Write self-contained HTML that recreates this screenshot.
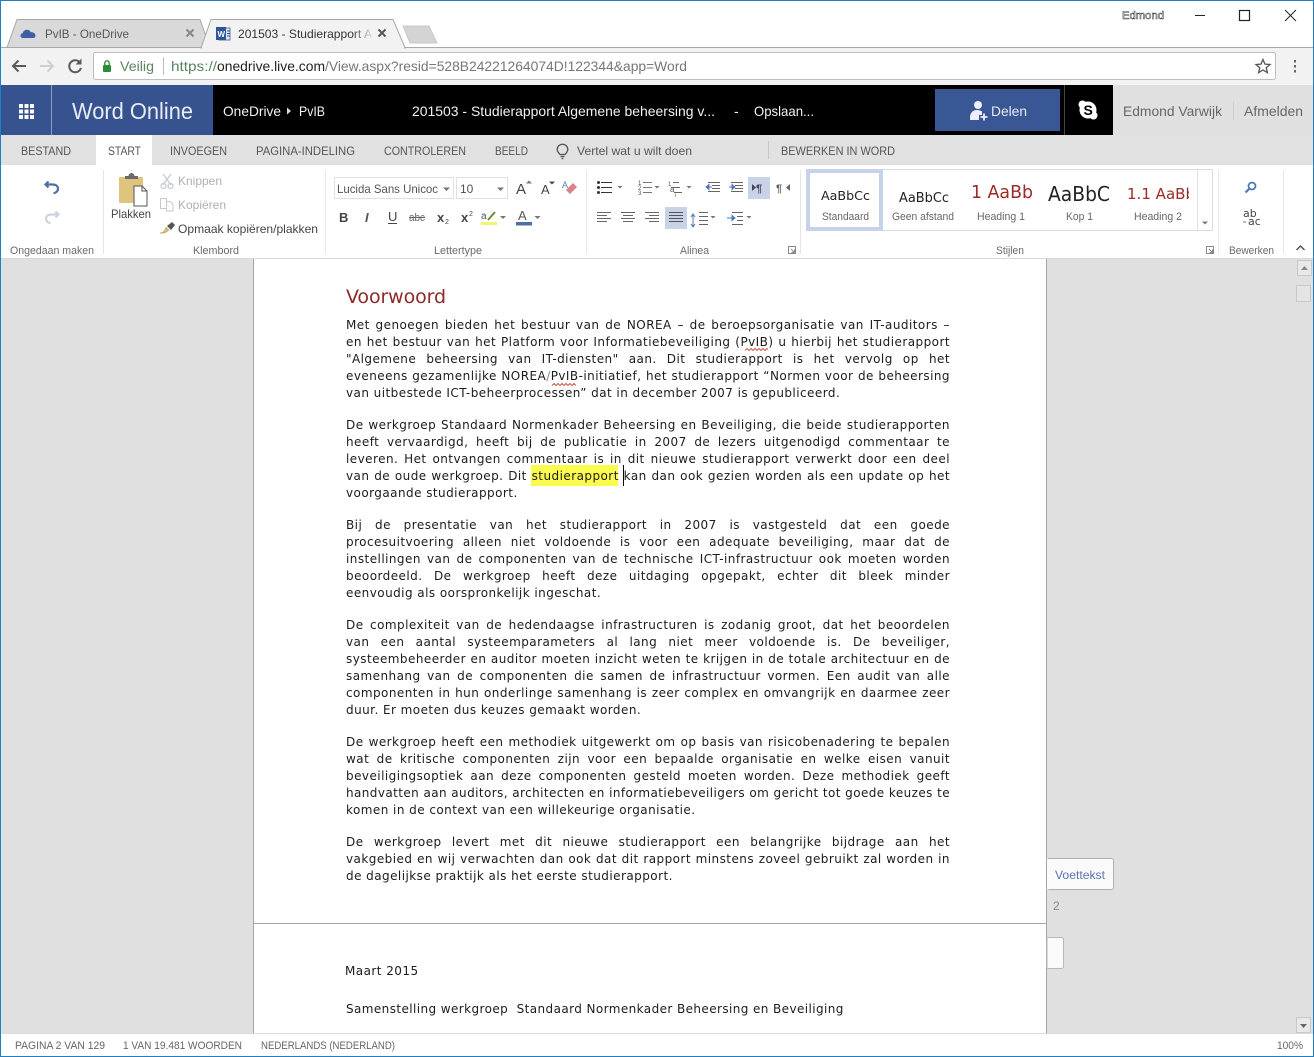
<!DOCTYPE html>
<html lang="nl"><head><meta charset="utf-8"><title>Word Online</title>
<style>
html,body{margin:0;padding:0;background:#fff}
#w{position:relative;width:1314px;height:1057px;overflow:hidden;background:#fff}
svg{position:absolute;left:0;top:0}
svg text{font-family:"Liberation Sans",sans-serif;white-space:pre}
#doc{position:absolute;left:0;top:1px;width:1314px;height:1057px;font:12px/17px "DejaVu Sans",sans-serif;color:#1c1c1c}
.l{position:absolute;left:346px;width:604px;height:17px;text-align:justify;text-align-last:justify;white-space:nowrap;letter-spacing:.45px}
.e{text-align:left;text-align-last:left;white-space:pre}
</style></head><body><div id="w">

<svg width="1314" height="1057" viewBox="0 0 1314 1057" style="z-index:0">
<!-- chrome -->
<rect width="1314" height="1057" fill="#fff"/>
<rect x="0" y="48" width="1314" height="37" fill="#f2f2f2"/>
<rect x="0" y="47" width="1314" height="1" fill="#a8a8a8"/>
<polygon points="7,47.5 17,19.5 200,19.5 210,47.5" fill="#d9d9d9" stroke="#a8a8a8"/>
<polygon points="201,48 211,19.5 393,19.5 405,47.5 405,48" fill="#f2f2f2" stroke="#a8a8a8"/>
<rect x="202" y="47" width="202" height="2" fill="#f2f2f2"/>
<polygon points="403,26 429,26 437,43 410,43" fill="#d4d4d4" stroke="#cacaca"/>
<path d="M23 38c-1.500 0-2.500-1-2.500-2.400 0-1.300 1-2.300 2.200-2.400 .5-2 2.200-3.400 4.200-3.400 1.700 0 3.200 1 3.900 2.400 2.400-.3 4.700 1.300 4.700 3.400 0 1.500-1 2.400-2.500 2.400z" fill="#3f5fa8"/>
<text x="45" y="38" font-size="12" fill="#555" textLength="84" lengthAdjust="spacingAndGlyphs">PvIB - OneDrive</text>
<path d="M186.500 29.500l7 7M193.500 29.500l-7 7" stroke="#888" stroke-width="2"/>
<rect x="219" y="28" width="11" height="12" fill="#e4e8f0" stroke="#5a78b0"/>
<rect x="216" y="27" width="10" height="13" fill="#2f5597"/>
<text x="217.500" y="37" font-size="8" font-weight="bold" fill="#fff">W</text>
<path d="M227 31h3M227 33.500h3M227 36h3" stroke="#2f5597"/>
<text x="238" y="38" font-size="12" fill="#333" textLength="134" lengthAdjust="spacingAndGlyphs">201503 - Studierapport A</text>
<defs><linearGradient id="f"><stop offset="0" stop-color="#f2f2f2" stop-opacity="0"/><stop offset="1" stop-color="#f2f2f2"/></linearGradient></defs>
<rect x="352" y="25" width="22" height="18" fill="url(#f)"/>
<path d="M378.500 29.500l7 7M385.500 29.500l-7 7" stroke="#555" stroke-width="2"/>
<text x="1122" y="19" font-size="11" fill="#fff" stroke="#333" stroke-width=".5" textLength="42" lengthAdjust="spacingAndGlyphs">Edmond</text>
<path d="M1195 15.500h10" stroke="#222"/>
<rect x="1239.500" y="10.500" width="10" height="10" fill="none" stroke="#222" stroke-width="1.200"/>
<path d="M1285 10l11 11M1296 10l-11 11" stroke="#222"/>
<!-- nav -->
<path d="M26 66H13M18.500 60.500L13 66l5.500 5.500" fill="none" stroke="#5a5a5a" stroke-width="2"/>
<path d="M40 66h13M47.500 60.500L53 66l-5.500 5.500" fill="none" stroke="#cfcfcf" stroke-width="2"/>
<path d="M80 62.500a6 6 0 1 0 1 5.500" fill="none" stroke="#5a5a5a" stroke-width="2"/>
<path d="M81.500 58.500v6h-6z" fill="#5a5a5a"/>
<rect x="93.500" y="52.500" width="1182" height="27" rx="2" fill="#fff" stroke="#bdbdbd"/>
<rect x="103" y="65" width="8" height="7" rx="1" fill="#2e8b3a"/>
<path d="M104.800 65v-2a2.200 2.200 0 0 1 4.400 0v2" fill="none" stroke="#2e8b3a" stroke-width="1.300"/>
<text x="120" y="71" font-size="13.500" fill="#5b8460" textLength="34" lengthAdjust="spacingAndGlyphs">Veilig</text>
<rect x="163" y="57" width="1" height="18" fill="#bbb"/>
<text x="171" y="71" font-size="14" fill="#5b8460" textLength="46" lengthAdjust="spacingAndGlyphs">https://</text>
<text x="217" y="71" font-size="14" fill="#222" textLength="108" lengthAdjust="spacingAndGlyphs">onedrive.live.com</text>
<text x="325" y="71" font-size="14" fill="#777" textLength="362" lengthAdjust="spacingAndGlyphs">/View.aspx?resid=528B24221264074D!122344&amp;app=Word</text>
<path d="M1263 59.500l2 4.600 5 .4-3.800 3.200 1.200 4.900-4.400-2.600-4.400 2.600 1.200-4.900-3.800-3.200 5-.4z" fill="none" stroke="#555" stroke-width="1.300"/>
<path d="M1295 60v2.500M1295 65v2.500M1295 70v2.500" stroke="#666" stroke-width="2"/>
<!-- header -->
<rect x="0" y="85" width="1113" height="50" fill="#000"/>
<rect x="1113" y="85" width="201" height="50" fill="#e0e0e0"/>
<rect x="1" y="85" width="212" height="50" fill="#36538f"/>
<rect x="51" y="85" width="1" height="50" fill="#8f9fc2"/>
<g fill="#fff"><rect x="19" y="104" width="4" height="4"/><rect x="24.500" y="104" width="4" height="4"/><rect x="30" y="104" width="4" height="4"/><rect x="19" y="109.500" width="4" height="4"/><rect x="24.500" y="109.500" width="4" height="4"/><rect x="30" y="109.500" width="4" height="4"/><rect x="19" y="115" width="4" height="4"/><rect x="24.500" y="115" width="4" height="4"/><rect x="30" y="115" width="4" height="4"/></g>
<text x="72" y="119" font-size="23" fill="#e8ecf5" textLength="121" lengthAdjust="spacingAndGlyphs">Word Online</text>
<text x="223" y="116" font-size="14" fill="#f2f2f2" textLength="58" lengthAdjust="spacingAndGlyphs">OneDrive</text>
<path d="M287 107.500l4 3.500-4 3.500z" fill="#ddd"/>
<text x="299" y="116" font-size="14" fill="#f2f2f2" textLength="26" lengthAdjust="spacingAndGlyphs">PvIB</text>
<text x="412" y="116" font-size="14" fill="#f2f2f2" textLength="303" lengthAdjust="spacingAndGlyphs">201503 - Studierapport Algemene beheersing v...</text>
<text x="734" y="116" font-size="14" fill="#f2f2f2">-</text>
<text x="754" y="116" font-size="14" fill="#f2f2f2" textLength="60" lengthAdjust="spacingAndGlyphs">Opslaan...</text>
<rect x="935" y="89" width="125" height="42" fill="#3a5795"/>
<circle cx="978" cy="105" r="4" fill="#eef"/>
<path d="M970 120v-3c0-4 3-7 7-7 2 0 3.500.5 5 1.500v3.500h-3v5z" fill="#eef"/>
<path d="M984 113.500v7M980.500 117h7" stroke="#eef" stroke-width="1.800"/>
<text x="991" y="116" font-size="14" fill="#e8ecf5" textLength="36" lengthAdjust="spacingAndGlyphs">Delen</text>
<rect x="1064" y="85" width="1" height="50" fill="#444"/>
<circle cx="1088" cy="110" r="8.500" fill="#fff"/>
<circle cx="1082.500" cy="104.500" r="4" fill="#fff"/><circle cx="1093.500" cy="115.500" r="4" fill="#fff"/>
<text x="1083.500" y="115" font-size="14" font-weight="bold" fill="#000">S</text>
<text x="1123" y="116" font-size="14" fill="#666" textLength="99" lengthAdjust="spacingAndGlyphs">Edmond Varwijk</text>
<rect x="1233" y="102" width="1" height="18" fill="#ccc"/>
<text x="1244" y="116" font-size="14" fill="#666" textLength="59" lengthAdjust="spacingAndGlyphs">Afmelden</text>
<!-- tabs -->
<rect x="1" y="135" width="1312" height="30" fill="#e1e1e1"/>
<rect x="96" y="135" width="56" height="31" fill="#fff"/>
<g font-size="12" fill="#555">
<text x="21" y="155" textLength="50" lengthAdjust="spacingAndGlyphs">BESTAND</text>
<text x="108" y="155" textLength="33" lengthAdjust="spacingAndGlyphs">START</text>
<text x="170" y="155" textLength="57" lengthAdjust="spacingAndGlyphs">INVOEGEN</text>
<text x="256" y="155" textLength="99" lengthAdjust="spacingAndGlyphs">PAGINA-INDELING</text>
<text x="384" y="155" textLength="82" lengthAdjust="spacingAndGlyphs">CONTROLEREN</text>
<text x="495" y="155" textLength="33" lengthAdjust="spacingAndGlyphs">BEELD</text>
<text x="577" y="155" textLength="115" lengthAdjust="spacingAndGlyphs">Vertel wat u wilt doen</text>
<text x="781" y="155" textLength="114" lengthAdjust="spacingAndGlyphs">BEWERKEN IN WORD</text>
</g>
<path d="M560 154.500c-1-1.500-2.800-2.500-2.800-5a5.300 5.300 0 0 1 10.600 0c0 2.500-1.800 3.500-2.800 5z" fill="none" stroke="#555" stroke-width="1.300"/>
<path d="M560.500 156.500h4M561.500 158.500h2" stroke="#555" stroke-width="1.300"/>
<rect x="768" y="141" width="1" height="18" fill="#c8c8c8"/>
<!-- ribbon -->
<rect x="1" y="258" width="1312" height="1" fill="#d8d8d8"/>
<g fill="#e6e6e6"><rect x="103" y="170" width="1" height="84"/><rect x="325" y="170" width="1" height="84"/><rect x="586" y="170" width="1" height="84"/><rect x="800" y="170" width="1" height="84"/><rect x="1218" y="170" width="1" height="84"/><rect x="1283" y="170" width="1" height="84"/></g>
<g font-size="11" fill="#6a6a6a">
<text x="10" y="254" textLength="84" lengthAdjust="spacingAndGlyphs">Ongedaan maken</text>
<text x="193" y="254" textLength="46" lengthAdjust="spacingAndGlyphs">Klembord</text>
<text x="434" y="254" textLength="48" lengthAdjust="spacingAndGlyphs">Lettertype</text>
<text x="680" y="254" textLength="29" lengthAdjust="spacingAndGlyphs">Alinea</text>
<text x="996" y="254" textLength="28" lengthAdjust="spacingAndGlyphs">Stijlen</text>
<text x="1229" y="254" textLength="45" lengthAdjust="spacingAndGlyphs">Bewerken</text>
</g>
<!-- undo -->
<path d="M48.500 181.500l-3 3 3 3M45.500 184.500h7c3.500 0 5.500 1.800 5.500 4.200 0 2.400-2 4.300-4.500 4.300" fill="none" stroke="#4f6fa5" stroke-width="2.200"/>
<path d="M55.500 211.500l3 3-3 3M58.500 214.500h-7c-3.500 0-5.500 1.800-5.500 4.200 0 2.400 2 4.300 4.500 4.300" fill="none" stroke="#ccd4e0" stroke-width="2.200"/>
<!-- paste -->
<rect x="119" y="177" width="24" height="26" rx="1" fill="#dfc47e"/>
<path d="M125 179v-3h3.500a3 3 0 0 1 6 0h3.500v3z" fill="#6b6b6b"/>
<path d="M134 186h8l5 5v15h-13z" fill="#fff" stroke="#555"/>
<path d="M142 186v5h5" fill="none" stroke="#555"/>
<text x="111" y="218" font-size="12" fill="#444" textLength="40" lengthAdjust="spacingAndGlyphs">Plakken</text>
<path d="M163 174l8 11M171 174l-8 11" stroke="#c6cbd3" stroke-width="1.300"/><circle cx="163.500" cy="186" r="2.500" fill="none" stroke="#c6cbd3" stroke-width="1.300"/><circle cx="170.500" cy="186" r="2.500" fill="none" stroke="#c6cbd3" stroke-width="1.300"/>
<text x="178" y="185" font-size="12" fill="#b0b0b0" textLength="44" lengthAdjust="spacingAndGlyphs">Knippen</text>
<path d="M160.500 198.500h6v10h-6zM166.500 201.500h3.500l3 3v6.500h-6.500z" fill="#fff" stroke="#c9c9c9"/>
<text x="178" y="209" font-size="12" fill="#b0b0b0" textLength="48" lengthAdjust="spacingAndGlyphs">Kopiëren</text>
<path d="M160 233c3 0 5-3 6-6l3 3c-2 2-5 4-9 3z" fill="#d8b86c" stroke="#b89a52" stroke-width=".5"/>
<path d="M167 226l5-4 3 3-4 5z" fill="#555"/>
<text x="178" y="233" font-size="12" fill="#444" textLength="140" lengthAdjust="spacingAndGlyphs">Opmaak kopiëren/plakken</text>
<!-- font -->
<rect x="334.500" y="177.500" width="119" height="21" fill="#fff" stroke="#e0e0e0"/>
<rect x="456.500" y="177.500" width="51" height="21" fill="#fff" stroke="#e0e0e0"/>
<text x="337" y="193" font-size="12" fill="#555" textLength="101" lengthAdjust="spacingAndGlyphs">Lucida Sans Unicoc</text>
<text x="460" y="193" font-size="12" fill="#555">10</text>
<path d="M443 187.500h7l-3.500 3.500zM497 187.500h7l-3.500 3.500z" fill="#777"/>
<text x="516" y="194" font-size="15" fill="#444">A</text>
<path d="M526 183.500h6l-3-3z" fill="#777"/>
<text x="541" y="194" font-size="13" fill="#444">A</text>
<path d="M549 181.500h6l-3 3z" fill="#444"/>
<path d="M566 190l7-7 4 4-7 7z" fill="#d9828c"/><text x="562" y="188" font-size="9" fill="#5a7aa8">A</text>
<text x="339" y="222" font-size="13" font-weight="bold" fill="#444">B</text>
<text x="365" y="222" font-size="13" font-weight="bold" font-style="italic" fill="#555">I</text>
<text x="388" y="221" font-size="13" fill="#444">U</text><rect x="388" y="223" width="9" height="1" fill="#444"/>
<text x="409" y="221" font-size="11" fill="#666" textLength="16" lengthAdjust="spacingAndGlyphs">abc</text><rect x="409" y="217" width="16" height="1" fill="#666"/>
<text x="437" y="222" font-size="13" font-weight="bold" fill="#444">x</text><text x="445" y="224" font-size="7" fill="#444">2</text>
<text x="461" y="222" font-size="13" font-weight="bold" fill="#444">x</text><text x="469" y="216" font-size="7" fill="#444">2</text>
<text x="481" y="219" font-size="10" fill="#555">a</text><path d="M488 220l7-8" stroke="#6b8f3a" stroke-width="2"/>
<rect x="481" y="222" width="16" height="3" fill="#f4f36b"/>
<path d="M500 216h6l-3 3zM534.500 216h6l-3 3z" fill="#777"/>
<text x="518" y="220" font-size="13" fill="#555">A</text><rect x="516" y="222" width="16" height="3.500" fill="#4f6fa5"/>
<!-- paragraph -->
<rect x="748" y="177" width="22" height="22" fill="#c9d3e8"/>
<rect x="665" y="207" width="22" height="22" fill="#c9d3e8"/>
<g fill="none" stroke="#666">
<path d="M601 182.500h11M601 187.500h11M601 192.500h11" stroke="#333"/>
<path d="M643 182.500h9M643 187.500h9M643 192.500h9" stroke="#777"/>
<path d="M673 182.500h6M671 187.500h9M674 192.500h8"/>
<path d="M708 182.500h12M712 185.500h8M712 188.500h8M708 191.500h12"/>
<path d="M731 182.500h12M735 185.500h8M735 188.500h8M731 191.500h12"/>
<path d="M597 212.500h14M597 215.500h10M597 218.500h14M597 221.500h10"/>
<path d="M621 212.500h14M623 215.500h10M621 218.500h14M623 221.500h10"/>
<path d="M645 212.500h14M649 215.500h10M645 218.500h14M649 221.500h10"/>
<path d="M669 212.500h14M669 215.500h14M669 218.500h14M669 221.500h14" stroke="#555"/>
<path d="M699 212.500h9M699 216.500h9M699 220.500h9M699 224.500h9"/>
<path d="M732 212.500h11M737 216.500h6M737 220.500h6M732 224.500h11"/>
</g>
<g fill="#333"><circle cx="598.500" cy="182.500" r="1.500"/><circle cx="598.500" cy="187.500" r="1.500"/><circle cx="598.500" cy="192.500" r="1.500"/></g>
<g font-size="6" fill="#555"><text x="638" y="185">1</text><text x="638" y="190">2</text><text x="638" y="195">3</text></g>
<text x="668" y="186" font-size="6" fill="#555">1</text><text x="670" y="192" font-size="8" fill="#555">a</text><text x="675" y="197" font-size="6" fill="#555">i</text>
<path d="M706 187h6M706 187l3-2.500v5z" stroke="#4f79b5" fill="#4f79b5"/>
<path d="M729 187h6M735 187l-3-2.500v5z" stroke="#4f79b5" fill="#4f79b5"/>
<path d="M693 215v11M691 217l2-3 2 3M691 224l2 3 2-3" fill="none" stroke="#4f79b5"/>
<path d="M727 218h8M735 218l-3-2.500v5z" stroke="#4f79b5" fill="#4f79b5"/>
<path d="M752 184v7l4-3.500z" fill="#445"/><text x="756" y="192" font-size="11" font-weight="bold" fill="#445">¶</text>
<text x="776" y="192" font-size="11" font-weight="bold" fill="#666">¶</text><path d="M790 184v7l-4-3.500z" fill="#666"/>
<g fill="#777"><path d="M617.500 186h5l-2.500 2.500zM654.500 186h5l-2.500 2.500zM686.500 186h5l-2.500 2.500zM710.500 216h5l-2.500 2.500zM746.500 216h5l-2.500 2.500z"/></g>
<path d="M788.500 246.500h7v7h-7zM791 249l3 3M794.500 249.500v3h-3" fill="none" stroke="#888"/>
<!-- styles -->
<rect x="806.500" y="169.500" width="406" height="61" fill="#fff" stroke="#dcdcdc"/>
<rect x="808" y="171" width="73" height="58" fill="#fff" stroke="#c6d3ea" stroke-width="4"/>
<rect x="1197" y="170" width="1" height="60" fill="#e2e2e2"/>
<path d="M1202 221.500h6l-3 3z" fill="#777"/>
<text x="821" y="200" font-size="12.500" fill="#222" style="font-family:'DejaVu Sans',sans-serif" textLength="49" lengthAdjust="spacingAndGlyphs">AaBbCc</text>
<text x="899" y="202" font-size="13" fill="#222" style="font-family:'DejaVu Sans',sans-serif" textLength="50" lengthAdjust="spacingAndGlyphs">AaBbCc</text>
<text x="971" y="198" font-size="18" fill="#9c2b25" style="font-family:'DejaVu Sans',sans-serif" textLength="62" lengthAdjust="spacingAndGlyphs">1 AaBb</text>
<text x="1048" y="201" font-size="20" fill="#222" style="font-family:'DejaVu Sans',sans-serif" textLength="62" lengthAdjust="spacingAndGlyphs">AaBbC</text>
<svg x="1126" y="180" width="63" height="30"><text x="1" y="19" font-size="15.500" fill="#9c2b25" style="font-family:'DejaVu Sans',sans-serif" textLength="68" lengthAdjust="spacingAndGlyphs">1.1 AaBb</text></svg>
<g font-size="11" fill="#666">
<text x="822" y="220" textLength="47" lengthAdjust="spacingAndGlyphs">Standaard</text>
<text x="892" y="220" textLength="62" lengthAdjust="spacingAndGlyphs">Geen afstand</text>
<text x="977" y="220" textLength="48" lengthAdjust="spacingAndGlyphs">Heading 1</text>
<text x="1066" y="220" textLength="27" lengthAdjust="spacingAndGlyphs">Kop 1</text>
<text x="1134" y="220" textLength="48" lengthAdjust="spacingAndGlyphs">Heading 2</text>
</g>
<path d="M1206.500 246.500h7v7h-7zM1209 249l3 3M1212.500 249.500v3h-3" fill="none" stroke="#888"/>
<circle cx="1252" cy="186" r="3.500" fill="none" stroke="#4f79b5" stroke-width="1.800"/>
<path d="M1249.500 188.500l-4 4" stroke="#4f79b5" stroke-width="2.200"/>
<text x="1243" y="217" font-size="11" fill="#444" style="font-family:'DejaVu Sans',sans-serif">ab</text>
<text x="1248" y="225" font-size="11" fill="#444" style="font-family:'DejaVu Sans',sans-serif">ac</text>
<path d="M1243 222h3" stroke="#4f79b5"/>
<path d="M1296.500 250l4-4 4 4" fill="none" stroke="#555" stroke-width="1.500"/>
<!-- doc bg -->
<rect x="1" y="259" width="1312" height="774" fill="#e0e0e0"/>
<rect x="253" y="259" width="793" height="774" fill="#fff"/>
<rect x="253" y="259" width="1" height="774" fill="#a6a6a6"/>
<rect x="1046" y="259" width="1" height="774" fill="#a6a6a6"/>
<rect x="253" y="923" width="793" height="1" fill="#a6a6a6"/>
<rect x="1047.500" y="858.500" width="66" height="31" rx="2" fill="#fafafa" stroke="#b0b0b0"/>
<rect x="1047" y="859" width="2" height="30" fill="#fafafa"/>
<text x="1055" y="879" font-size="12" fill="#5a75b5" textLength="50" lengthAdjust="spacingAndGlyphs">Voettekst</text>
<text x="1053" y="910" font-size="12" fill="#888">2</text>
<path d="M1047 937.500h14.500a2 2 0 0 1 2 2v27a2 2 0 0 1-2 2H1047z" fill="#fafafa" stroke="#b8b8b8"/>
<rect x="1297.500" y="260.500" width="14" height="15" fill="#e8e8e8" stroke="#c8c8c8"/>
<path d="M1301 270h7l-3.500-4z" fill="#888"/>
<rect x="1296.500" y="285.500" width="14" height="16" fill="#e4e4e4" stroke="#c8c8c8"/>
<rect x="1296.500" y="1017.500" width="14" height="15" fill="#e8e8e8" stroke="#c8c8c8"/>
<path d="M1300 1024h7l-3.500 4z" fill="#666"/>
<!-- highlight -->
<rect x="531" y="465" width="87" height="21" fill="#fbfb4e"/>
<rect x="623" y="465" width="1" height="21" fill="#000"/>
<path d="M745 350.500l2-2 2 2 2-2 2 2 2-2 2 2 2-2 2 2 2-2 2 2 2-2 1 1" fill="none" stroke="#c0392b" stroke-width=".8"/>
<path d="M552 385.500l2-2 2 2 2-2 2 2 2-2 2 2 2-2 2 2 2-2 2 2 2-2 2 2" fill="none" stroke="#c0392b" stroke-width=".8"/>
</svg>

<div id="doc" style="z-index:1">
<div style="position:absolute;left:346px;top:284px;font-size:19px;line-height:24px;color:#8c2a25;letter-spacing:-.1px">Voorwoord</div>

<div class="l" style="top:316px">Met genoegen bieden het bestuur van de NOREA – de beroepsorganisatie van IT-auditors –</div>
<div class="l" style="top:333px">en het bestuur van het Platform voor Informatiebeveiliging (PvIB) u hierbij het studierapport</div>
<div class="l" style="top:350px">"Algemene beheersing van IT-diensten" aan. Dit studierapport is het vervolg op het</div>
<div class="l" style="top:367px">eveneens gezamenlijke NOREA<span style="color:#888">/</span>PvIB-initiatief, het studierapport “Normen voor de beheersing</div>
<div class="l e" style="top:384px">van uitbestede ICT-beheerprocessen” dat in december 2007 is gepubliceerd.</div>

<div class="l" style="top:416px">De werkgroep Standaard Normenkader Beheersing en Beveiliging, die beide studierapporten</div>
<div class="l" style="top:433px">heeft vervaardigd, heeft bij de publicatie in 2007 de lezers uitgenodigd commentaar te</div>
<div class="l" style="top:450px">leveren. Het ontvangen commentaar is in dit nieuwe studierapport verwerkt door een deel</div>
<div class="l" style="top:467px">van de oude werkgroep. Dit studierapport kan dan ook gezien worden als een update op het</div>
<div class="l e" style="top:484px">voorgaande studierapport.</div>

<div class="l" style="top:516px">Bij de presentatie van het studierapport in 2007 is vastgesteld dat een goede</div>
<div class="l" style="top:533px">procesuitvoering alleen niet voldoende is voor een adequate beveiliging, maar dat de</div>
<div class="l" style="top:550px">instellingen van de componenten van de technische ICT-infrastructuur ook moeten worden</div>
<div class="l" style="top:567px">beoordeeld. De werkgroep heeft deze uitdaging opgepakt, echter dit bleek minder</div>
<div class="l e" style="top:584px">eenvoudig als oorspronkelijk ingeschat.</div>

<div class="l" style="top:616px">De complexiteit van de hedendaagse infrastructuren is zodanig groot, dat het beoordelen</div>
<div class="l" style="top:633px">van een aantal systeemparameters al lang niet meer voldoende is. De beveiliger,</div>
<div class="l" style="top:650px">systeembeheerder en auditor moeten inzicht weten te krijgen in de totale architectuur en de</div>
<div class="l" style="top:667px">samenhang van de componenten die samen de infrastructuur vormen. Een audit van alle</div>
<div class="l" style="top:684px">componenten in hun onderlinge samenhang is zeer complex en omvangrijk en daarmee zeer</div>
<div class="l e" style="top:701px">duur. Er moeten dus keuzes gemaakt worden.</div>

<div class="l" style="top:733px">De werkgroep heeft een methodiek uitgewerkt om op basis van risicobenadering te bepalen</div>
<div class="l" style="top:750px">wat de kritische componenten zijn voor een bepaalde organisatie en welke eisen vanuit</div>
<div class="l" style="top:767px">beveiligingsoptiek aan deze componenten gesteld moeten worden. Deze methodiek geeft</div>
<div class="l" style="top:784px;letter-spacing:.41px">handvatten aan auditors, architecten en informatiebeveiligers om gericht tot goede keuzes te</div>
<div class="l e" style="top:801px">komen in de context van een willekeurige organisatie.</div>

<div class="l" style="top:833px">De werkgroep levert met dit nieuwe studierapport een belangrijke bijdrage aan het</div>
<div class="l" style="top:850px">vakgebied en wij verwachten dan ook dat dit rapport minstens zoveel gebruikt zal worden in</div>
<div class="l e" style="top:867px">de dagelijkse praktijk als het eerste studierapport.</div>

<div class="l e" style="top:962px;left:345px">Maart 2015</div>
<div class="l e" style="top:1000px;letter-spacing:.41px">Samenstelling werkgroep  Standaard Normenkader Beheersing en Beveiliging</div>
</div>

<svg width="1314" height="1057" viewBox="0 0 1314 1057" style="z-index:2">
<rect x="1" y="1033" width="1312" height="23" fill="#fff"/>
<rect x="1" y="1033" width="1312" height="1" fill="#dcdcdc"/>
<g font-size="11" fill="#666">
<text x="15" y="1049" textLength="90" lengthAdjust="spacingAndGlyphs">PAGINA 2 VAN 129</text>
<text x="123" y="1049" textLength="119" lengthAdjust="spacingAndGlyphs">1 VAN 19.481 WOORDEN</text>
<text x="261" y="1049" textLength="134" lengthAdjust="spacingAndGlyphs">NEDERLANDS (NEDERLAND)</text>
<text x="1277" y="1049" textLength="26" lengthAdjust="spacingAndGlyphs">100%</text>
</g>
<rect x="0" y="0" width="1314" height="1" fill="#1f7fc4"/>
<rect x="0" y="0" width="1" height="1057" fill="#1f7fc4"/>
<rect x="1313" y="0" width="1" height="1057" fill="#1f7fc4"/>
<rect x="0" y="1056" width="1314" height="1" fill="#1f7fc4"/>
</svg>
</div></body></html>
